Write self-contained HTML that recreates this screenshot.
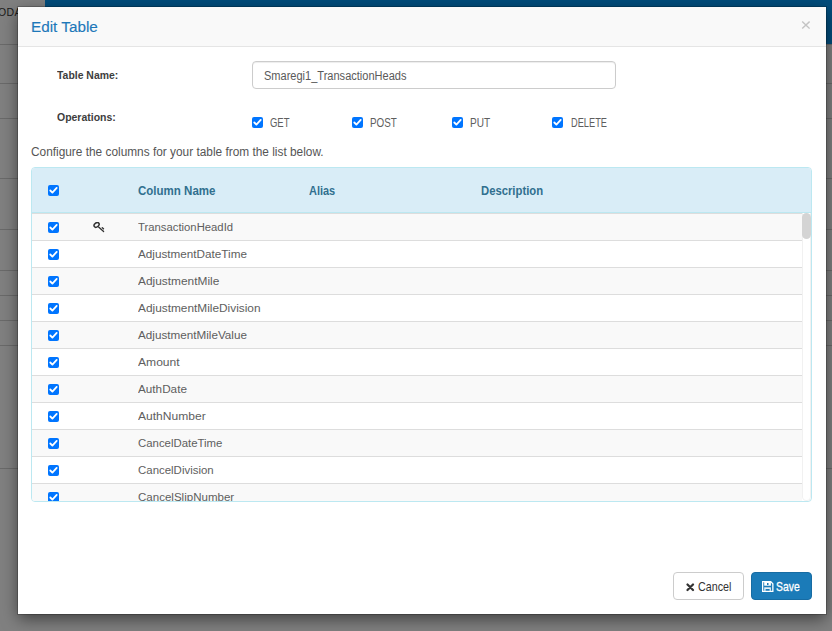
<!DOCTYPE html>
<html><head><meta charset="utf-8">
<style>
*{box-sizing:border-box;margin:0;padding:0;-webkit-font-smoothing:antialiased}
html,body{width:832px;height:631px;overflow:hidden;background:#808080;font-family:"Liberation Sans",sans-serif;position:relative}
.abs{position:absolute}
.sx{transform-origin:0 0}
.bgbar{left:45px;top:0;width:787px;height:44px;background:#024d7c}
.bgline{left:0;width:832px;height:1px;background:#6a6a6a}
.oda{left:-2px;top:6px;font-size:10.5px;color:#1a1a1a;letter-spacing:0.4px}
.modal{left:18px;top:7px;width:808px;height:607px;background:#fff;box-shadow:0 0 0 1px rgba(0,0,0,.2),0 5px 15px rgba(0,0,0,.5)}
.mh{left:0;top:0;width:808px;height:40px;background:#f9f9f9;border-bottom:1px solid #e5e5e5}
.title{left:13px;top:11px;font-size:15.5px;color:#1d78b9;white-space:nowrap;transform-origin:0 0;transform:scaleX(0.985);-webkit-text-stroke:0.15px #1d78b9}
.lbl{font-size:11px;font-weight:bold;color:#3d3d3d;white-space:nowrap}
.inp{left:234px;top:54px;width:364px;height:28px;border:1px solid #ccc;border-radius:4px;box-shadow:inset 0 1px 1px rgba(0,0,0,.075)}
.inptxt{left:11px;top:7px;font-size:12.3px;color:#5a5a5a;white-space:nowrap}
.cb{width:11px;height:11px;background:#0075ff;border-radius:2px}
.cb svg{position:absolute;left:0;top:0}
.op{font-size:12px;color:#5e5e5e;white-space:nowrap;top:109px}
.conf{left:13px;top:138px;font-size:12px;color:#555;white-space:nowrap}
.tbl{left:13px;top:160px;width:781px;height:335px;border:1px solid #bce8f1;border-radius:4px;overflow:hidden}
.th{left:0;top:0;width:779px;height:45px;background:#d9edf7;border-bottom:1px solid #bce8f1}
.thl{font-size:12px;font-weight:bold;color:#31708f;top:16px;white-space:nowrap}
.row{left:0;width:770px;height:27px;border-top:1px solid #ddd}
.odd{background:#f9f9f9}
.rt{left:106px;top:6px;font-size:11.7px;transform-origin:0 0;color:#5e5e5e;white-space:nowrap}
.track{left:770px;top:45px;width:9px;height:288px;border:1px solid #f1f1f1;border-top:0;border-radius:0 0 5px 5px}
.thumb{left:770px;top:45px;width:9px;height:26px;background:#d4d4d4;border-radius:4.5px}
.btn{height:28px;border-radius:4px;white-space:nowrap}
.cancel{left:655px;top:565px;width:71px;border:1px solid #ccc;background:#fff;color:#333}
.save{left:733px;top:565px;width:61px;background:#1b7bb8;color:#fff;border:1px solid #176ca3}
.bt{font-size:13px;top:7px}
</style></head><body>
<div class="abs bgbar"></div>
<div class="abs bgline" style="top:44px"></div>
<div class="abs bgline" style="top:83px"></div>
<div class="abs bgline" style="top:118px"></div>
<div class="abs bgline" style="top:178px"></div>
<div class="abs bgline" style="top:229px"></div>
<div class="abs bgline" style="top:270px"></div>
<div class="abs bgline" style="top:295px"></div>
<div class="abs bgline" style="top:320px"></div>
<div class="abs bgline" style="top:345px"></div>
<div class="abs bgline" style="top:468px"></div>
<div class="abs oda">ODA</div>

<div class="abs modal">
  <div class="abs mh"><div class="abs title">Edit Table</div>
  <svg class="abs" style="left:783px;top:14px" width="9" height="9" viewBox="0 0 9 9"><path d="M1.2 0.6 L8.6 7.6 M8.6 0.6 L1.2 7.6" stroke="#c4c4c4" stroke-width="1.4"/></svg></div>
  <div class="abs lbl sx" style="left:39px;top:62px;transform:scaleX(0.948)">Table Name:</div>
  <div class="abs inp"><div class="abs inptxt sx" style="transform:scaleX(0.897)">Smaregi1_TransactionHeads</div></div>
  <div class="abs lbl sx" style="left:39px;top:104px;transform:scaleX(0.952)">Operations:</div>

  <div class="abs cb" style="left:234px;top:110px"><svg width="11" height="11" viewBox="0 0 11 11"><path d="M2.3 5.5 L4.4 7.6 L8.7 2.9" stroke="#fff" stroke-width="1.8" fill="none" stroke-linecap="round" stroke-linejoin="round"/></svg></div>
  <div class="abs op sx" style="left:252px;transform:scaleX(0.79)">GET</div>
  <div class="abs cb" style="left:334px;top:110px"><svg width="11" height="11" viewBox="0 0 11 11"><path d="M2.3 5.5 L4.4 7.6 L8.7 2.9" stroke="#fff" stroke-width="1.8" fill="none" stroke-linecap="round" stroke-linejoin="round"/></svg></div>
  <div class="abs op sx" style="left:352px;transform:scaleX(0.82)">POST</div>
  <div class="abs cb" style="left:434px;top:110px"><svg width="11" height="11" viewBox="0 0 11 11"><path d="M2.3 5.5 L4.4 7.6 L8.7 2.9" stroke="#fff" stroke-width="1.8" fill="none" stroke-linecap="round" stroke-linejoin="round"/></svg></div>
  <div class="abs op sx" style="left:452px;transform:scaleX(0.84)">PUT</div>
  <div class="abs cb" style="left:534px;top:110px"><svg width="11" height="11" viewBox="0 0 11 11"><path d="M2.3 5.5 L4.4 7.6 L8.7 2.9" stroke="#fff" stroke-width="1.8" fill="none" stroke-linecap="round" stroke-linejoin="round"/></svg></div>
  <div class="abs op sx" style="left:553px;transform:scaleX(0.77)">DELETE</div>

  <div class="abs conf sx" style="transform:scaleX(0.988)">Configure the columns for your table from the list below.</div>

  <div class="abs tbl">
    <div class="abs th">
      <div class="abs cb" style="left:16px;top:17px"><svg width="11" height="11" viewBox="0 0 11 11"><path d="M2.3 5.5 L4.4 7.6 L8.7 2.9" stroke="#fff" stroke-width="1.8" fill="none" stroke-linecap="round" stroke-linejoin="round"/></svg></div>
      <div class="abs thl sx" style="left:106px;transform:scaleX(0.96)">Column Name</div>
      <div class="abs thl sx" style="left:277px;transform:scaleX(0.914)">Alias</div>
      <div class="abs thl sx" style="left:449px;transform:scaleX(0.94)">Description</div>
    </div>
<div class="abs row odd" style="top:45px"><div class="abs cb" style="left:16px;top:8px"><svg width="11" height="11" viewBox="0 0 11 11"><path d="M2.3 5.5 L4.4 7.6 L8.7 2.9" stroke="#fff" stroke-width="1.8" fill="none" stroke-linecap="round" stroke-linejoin="round"/></svg></div><svg class="abs" style="left:61px;top:8px" width="13" height="12" viewBox="0 0 13 12"><ellipse cx="3.6" cy="2.9" rx="2.8" ry="2.0" transform="rotate(-38 3.6 2.9)" fill="none" stroke="#333" stroke-width="1.5"/><path d="M5.6 5 L10.6 9.6" stroke="#333" stroke-width="1.3" fill="none" stroke-linecap="round"/><path d="M9.3 5.8 L10.5 6.8" stroke="#333" stroke-width="1.4" fill="none" stroke-linecap="round"/></svg><div class="abs rt" style="transform:scaleX(0.967)">TransactionHeadId</div></div>
<div class="abs row" style="top:72px"><div class="abs cb" style="left:16px;top:8px"><svg width="11" height="11" viewBox="0 0 11 11"><path d="M2.3 5.5 L4.4 7.6 L8.7 2.9" stroke="#fff" stroke-width="1.8" fill="none" stroke-linecap="round" stroke-linejoin="round"/></svg></div><div class="abs rt" style="transform:scaleX(1.002)">AdjustmentDateTime</div></div>
<div class="abs row odd" style="top:99px"><div class="abs cb" style="left:16px;top:8px"><svg width="11" height="11" viewBox="0 0 11 11"><path d="M2.3 5.5 L4.4 7.6 L8.7 2.9" stroke="#fff" stroke-width="1.8" fill="none" stroke-linecap="round" stroke-linejoin="round"/></svg></div><div class="abs rt" style="transform:scaleX(1.018)">AdjustmentMile</div></div>
<div class="abs row" style="top:126px"><div class="abs cb" style="left:16px;top:8px"><svg width="11" height="11" viewBox="0 0 11 11"><path d="M2.3 5.5 L4.4 7.6 L8.7 2.9" stroke="#fff" stroke-width="1.8" fill="none" stroke-linecap="round" stroke-linejoin="round"/></svg></div><div class="abs rt" style="transform:scaleX(1.014)">AdjustmentMileDivision</div></div>
<div class="abs row odd" style="top:153px"><div class="abs cb" style="left:16px;top:8px"><svg width="11" height="11" viewBox="0 0 11 11"><path d="M2.3 5.5 L4.4 7.6 L8.7 2.9" stroke="#fff" stroke-width="1.8" fill="none" stroke-linecap="round" stroke-linejoin="round"/></svg></div><div class="abs rt" style="transform:scaleX(1.0)">AdjustmentMileValue</div></div>
<div class="abs row" style="top:180px"><div class="abs cb" style="left:16px;top:8px"><svg width="11" height="11" viewBox="0 0 11 11"><path d="M2.3 5.5 L4.4 7.6 L8.7 2.9" stroke="#fff" stroke-width="1.8" fill="none" stroke-linecap="round" stroke-linejoin="round"/></svg></div><div class="abs rt" style="transform:scaleX(1.035)">Amount</div></div>
<div class="abs row odd" style="top:207px"><div class="abs cb" style="left:16px;top:8px"><svg width="11" height="11" viewBox="0 0 11 11"><path d="M2.3 5.5 L4.4 7.6 L8.7 2.9" stroke="#fff" stroke-width="1.8" fill="none" stroke-linecap="round" stroke-linejoin="round"/></svg></div><div class="abs rt" style="transform:scaleX(1.004)">AuthDate</div></div>
<div class="abs row" style="top:234px"><div class="abs cb" style="left:16px;top:8px"><svg width="11" height="11" viewBox="0 0 11 11"><path d="M2.3 5.5 L4.4 7.6 L8.7 2.9" stroke="#fff" stroke-width="1.8" fill="none" stroke-linecap="round" stroke-linejoin="round"/></svg></div><div class="abs rt" style="transform:scaleX(1.031)">AuthNumber</div></div>
<div class="abs row odd" style="top:261px"><div class="abs cb" style="left:16px;top:8px"><svg width="11" height="11" viewBox="0 0 11 11"><path d="M2.3 5.5 L4.4 7.6 L8.7 2.9" stroke="#fff" stroke-width="1.8" fill="none" stroke-linecap="round" stroke-linejoin="round"/></svg></div><div class="abs rt" style="transform:scaleX(0.975)">CancelDateTime</div></div>
<div class="abs row" style="top:288px"><div class="abs cb" style="left:16px;top:8px"><svg width="11" height="11" viewBox="0 0 11 11"><path d="M2.3 5.5 L4.4 7.6 L8.7 2.9" stroke="#fff" stroke-width="1.8" fill="none" stroke-linecap="round" stroke-linejoin="round"/></svg></div><div class="abs rt" style="transform:scaleX(0.979)">CancelDivision</div></div>
<div class="abs row odd" style="top:315px"><div class="abs cb" style="left:16px;top:8px"><svg width="11" height="11" viewBox="0 0 11 11"><path d="M2.3 5.5 L4.4 7.6 L8.7 2.9" stroke="#fff" stroke-width="1.8" fill="none" stroke-linecap="round" stroke-linejoin="round"/></svg></div><div class="abs rt" style="transform:scaleX(0.987)">CancelSlipNumber</div></div>

    <div class="abs track"></div>
    <div class="abs thumb"></div>
  </div>

  <div class="abs btn cancel">
    <svg class="abs" style="left:12px;top:10px" width="9" height="9" viewBox="0 0 9 9"><path d="M1.5 1.5 L7 7 M7 1.5 L1.5 7" stroke="#333" stroke-width="2.2" stroke-linecap="round"/></svg>
    <div class="abs bt sx" style="left:24px;top:6px;transform:scaleX(0.825)">Cancel</div>
  </div>
  <div class="abs btn save">
    <svg class="abs" style="left:10px;top:8px" width="12" height="11" viewBox="0 0 12 11"><path fill-rule="evenodd" fill="#fff" d="M0 0 H9 L11.5 2.5 V11 H0 Z M1.3 1.3 V9.7 H10.2 V3 L8.5 1.3 Z"/><rect x="2.2" y="1" width="6.7" height="3.7" fill="#fff"/><rect x="5" y="2" width="1.5" height="2" fill="#1b7bb8"/><rect x="2.2" y="6.3" width="6.7" height="3.6" fill="#e6f0f7"/><rect x="3.6" y="8" width="4" height="1.7" fill="#1b7bb8"/></svg>
    <div class="abs bt sx" style="left:24px;top:6px;transform:scaleX(0.8);-webkit-text-stroke:0.3px #fff">Save</div>
  </div>
</div>
</body></html>
